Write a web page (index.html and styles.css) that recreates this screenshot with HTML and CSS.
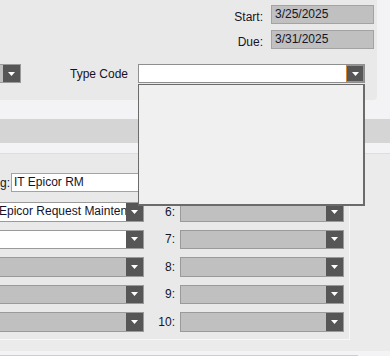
FILE: index.html
```html
<!DOCTYPE html>
<html>
<head>
<meta charset="utf-8">
<link rel="stylesheet" href="styles.css">
</head>
<body>
<div class="page">
  <section class="top">
    <div class="dates">
      <div class="drow"><span class="dlabel">Start:</span><span class="field ro">3/25/2025</span></div>
      <div class="drow"><span class="dlabel">Due:</span><span class="field ro">3/31/2025</span></div>
    </div>
    <div class="typerow">
      <div class="combo stub"><span class="ctext"></span><span class="cbtn"><svg width="7" height="4" viewBox="0 0 7 4"><polygon points="0,0 7,0 3.5,4" fill="#fff"/></svg></span></div>
      <span class="tlabel">Type Code</span>
      <div class="combo type"><span class="ctext"></span><span class="cbtn focus"><svg width="7" height="4" viewBox="0 0 7 4"><polygon points="0,0 7,0 3.5,4" fill="#fff"/></svg></span></div>
    </div>
  </section>
  <div class="strip"></div>
  <div class="band"></div>
  <div class="strip2"></div>
  <section class="lower">
    <div class="panel">
      <div class="grow">
        <span class="glabel">g:</span>
        <span class="field ginput">IT Epicor RM</span>
      </div>
      <div class="rows">
        <div class="row">
          <div class="combo lcombo white"><span class="ctext first">Epicor Request Maintenance</span><span class="cbtn"><svg width="7" height="4" viewBox="0 0 7 4"><polygon points="0,0 7,0 3.5,4" fill="#fff"/></svg></span></div>
          <span class="num">6:</span>
          <div class="combo rcombo"><span class="ctext"></span><span class="cbtn"><svg width="7" height="4" viewBox="0 0 7 4"><polygon points="0,0 7,0 3.5,4" fill="#fff"/></svg></span></div>
        </div>
        <div class="row">
          <div class="combo lcombo white"><span class="ctext"></span><span class="cbtn"><svg width="7" height="4" viewBox="0 0 7 4"><polygon points="0,0 7,0 3.5,4" fill="#fff"/></svg></span></div>
          <span class="num">7:</span>
          <div class="combo rcombo"><span class="ctext"></span><span class="cbtn"><svg width="7" height="4" viewBox="0 0 7 4"><polygon points="0,0 7,0 3.5,4" fill="#fff"/></svg></span></div>
        </div>
        <div class="row">
          <div class="combo lcombo"><span class="ctext"></span><span class="cbtn"><svg width="7" height="4" viewBox="0 0 7 4"><polygon points="0,0 7,0 3.5,4" fill="#fff"/></svg></span></div>
          <span class="num">8:</span>
          <div class="combo rcombo"><span class="ctext"></span><span class="cbtn"><svg width="7" height="4" viewBox="0 0 7 4"><polygon points="0,0 7,0 3.5,4" fill="#fff"/></svg></span></div>
        </div>
        <div class="row">
          <div class="combo lcombo"><span class="ctext"></span><span class="cbtn"><svg width="7" height="4" viewBox="0 0 7 4"><polygon points="0,0 7,0 3.5,4" fill="#fff"/></svg></span></div>
          <span class="num">9:</span>
          <div class="combo rcombo"><span class="ctext"></span><span class="cbtn"><svg width="7" height="4" viewBox="0 0 7 4"><polygon points="0,0 7,0 3.5,4" fill="#fff"/></svg></span></div>
        </div>
        <div class="row">
          <div class="combo lcombo"><span class="ctext"></span><span class="cbtn"><svg width="7" height="4" viewBox="0 0 7 4"><polygon points="0,0 7,0 3.5,4" fill="#fff"/></svg></span></div>
          <span class="num">10:</span>
          <div class="combo rcombo"><span class="ctext"></span><span class="cbtn"><svg width="7" height="4" viewBox="0 0 7 4"><polygon points="0,0 7,0 3.5,4" fill="#fff"/></svg></span></div>
        </div>
      </div>
    </div>
  </section>
  <div class="fstrip"></div>
  <div class="fline"></div>
  <div class="droplist"></div>
</div>
</body>
</html>
```
FILE: styles.css
```css
* { box-sizing: border-box; }
html, body { margin: 0; padding: 0; }
body {
  width: 390px;
  height: 356px;
  overflow: hidden;
  background: #f3f3f5;
  font-family: "Liberation Sans", Arial, sans-serif;
  font-size: 12px;
  color: #141428;
}
.page { position: relative; width: 390px; height: 356px; overflow: hidden; }

.top {
  width: 377px;
  height: 100px;
  background: #e9e9e9;
  border-bottom-right-radius: 4px;
  padding-top: 5px;
}
.dates {
  display: flex;
  flex-direction: column;
  align-items: flex-end;
  gap: 6px;
  padding-right: 3px;
}
.drow { display: flex; align-items: center; height: 19px; }
.dlabel { margin-right: 8px; margin-top: 4px; }
.field {
  display: block;
  height: 19px;
  line-height: 17px;
  border: 1px solid #a3a3a3;
  padding-left: 3px;
  white-space: nowrap;
  overflow: hidden;
}
.ro { width: 103px; background: #c0c0c0; }

.typerow { display: flex; align-items: center; height: 19px; margin-top: 15px; }
.combo {
  display: flex;
  height: 19px;
  border: 1px solid #9a9a9a;
  background: #c0c0c0;
  flex-shrink: 0;
}
.combo .ctext {
  flex: 1;
  min-width: 0;
  overflow: hidden;
  white-space: nowrap;
  padding-left: 3px;
  line-height: 17px;
}
.cbtn {
  width: 17px;
  flex-shrink: 0;
  background: #565656;
  display: flex;
  align-items: center;
  justify-content: center;
}
.cbtn svg { display: block; }
.stub { margin-left: -20px; width: 41px; }
.tlabel { margin-left: 49px; width: 68px; flex-shrink: 0; }
.type { width: 227px; background: #fff; border-color: #8f8f8f; }
.cbtn.focus { width: 18px; border: 1px solid #d4873a; }

.droplist {
  position: absolute;
  left: 138px;
  top: 84px;
  width: 227px;
  height: 122px;
  background: #f0f0f0;
  border: 1px solid #6b6b6b;
  border-right-width: 2px;
  border-bottom-width: 2px;
}

.strip { height: 19px; background: #f3f3f5; }
.band { height: 24px; background: #d5d5d5; }
.strip2 { height: 11px; background: #f3f3f5; border-bottom: 1px solid #dedede; }

.lower { height: 197px; background: #ebebeb; }
.panel {
  width: 350px;
  height: 186px;
  background: #e9e9e9;
  border-right: 1px solid #f7f7f7;
  border-bottom: 1px solid #f7f7f7;
  padding-top: 19px;
}
.grow { display: flex; align-items: center; height: 19px; }
.glabel { width: 11px; text-align: right; padding-right: 1px; flex-shrink: 0; }
.ginput { width: 150px; background: #fff; padding-left: 2px; }

.rows { display: flex; flex-direction: column; gap: 8px; margin-top: 10px; }
.row { display: flex; align-items: center; height: 19.5px; }
.row .combo { height: 19.5px; }
.lcombo { margin-left: -4px; width: 148px; }
.lcombo .ctext.first { padding-left: 2px; }
.white { background: #fff; }
.num { width: 31px; text-align: right; margin-right: 5px; flex-shrink: 0; }
.rcombo { width: 164px; }

.fstrip { height: 4px; background: #f3f3f5; }
.fline { width: 358px; height: 1px; background: #cdcdcd; }
```
